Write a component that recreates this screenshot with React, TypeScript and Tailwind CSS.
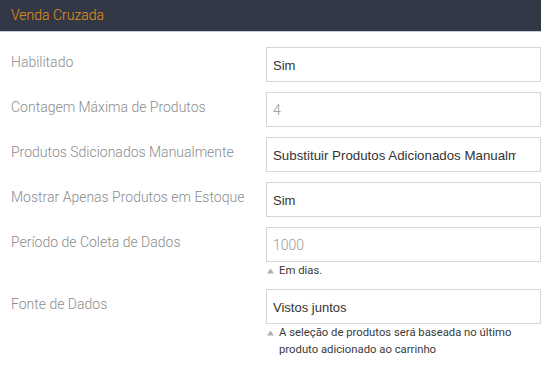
import React from "react";

const Tri = () => (
  <svg width="7" height="6" viewBox="0 0 7 6" className="mt-[6px] shrink-0">
    <polygon points="3.5,0.5 7,5.5 0,5.5" fill="#a9b1b9" />
  </svg>
);

function Row({
  label,
  children,
  hint,
}: {
  label: string;
  children: React.ReactNode;
  hint?: React.ReactNode;
}) {
  return (
    <div className="flex mb-[10px]">
      <div className="w-[266px] shrink-0 pl-[11px] pt-[5px] text-[14px] leading-[20px] font-light text-[#8c8c8c]">
        {label}
      </div>
      <div className="flex-1 min-w-0">
        <div className="h-[35px] border border-[#d5d5dd] bg-white flex items-center pl-[6px]">
          <div className="w-[243px] overflow-hidden whitespace-nowrap">{children}</div>
        </div>
        {hint && (
          <div className="flex gap-[5px] pl-[1px] text-[11.3px] leading-[17px] text-[#3a3a3a]" style={{ fontFamily: "Roboto, sans-serif" }}>
            <Tri />
            <div>{hint}</div>
          </div>
        )}
      </div>
    </div>
  );
}

const Val = ({ children, big }: { children: React.ReactNode; big?: boolean }) => (
  <span
    className={big ? "text-[13.3px] text-[#333]" : "text-[13px] text-[#333]"}
    style={{ fontFamily: '"Liberation Sans", Arial, sans-serif' }}
  >
    {children}
  </span>
);

const Ph = ({ children }: { children: React.ReactNode }) => (
  <span className="text-[14px] font-light text-[#9a9a9a]">{children}</span>
);

export default function App() {
  return (
    <div className="w-[541px] h-[369px] bg-white overflow-hidden" style={{ fontFamily: "Roboto, sans-serif" }}>
      <div className="h-[32px] bg-[#323845] border-b border-[#c6cad2] flex items-center pl-[11px]">
        <span className="text-[14px] font-light text-[#e6921e]">Venda Cruzada</span>
      </div>
      <div className="pt-[15px]">
        <Row label="Habilitado">
          <Val>Sim</Val>
        </Row>
        <Row label="Contagem Máxima de Produtos">
          <Ph>4</Ph>
        </Row>
        <Row label="Produtos Sdicionados Manualmente">
          <Val big>Substituir Produtos Adicionados Manualmente</Val>
        </Row>
        <Row label="Mostrar Apenas Produtos em Estoque">
          <Val>Sim</Val>
        </Row>
        <Row label="Período de Coleta de Dados" hint="Em dias.">
          <Ph>1000</Ph>
        </Row>
        <Row
          label="Fonte de Dados"
          hint={
            <>
              A seleção de produtos será baseada no último
              <br />
              produto adicionado ao carrinho
            </>
          }
        >
          <Val>Vistos juntos</Val>
        </Row>
      </div>
    </div>
  );
}
